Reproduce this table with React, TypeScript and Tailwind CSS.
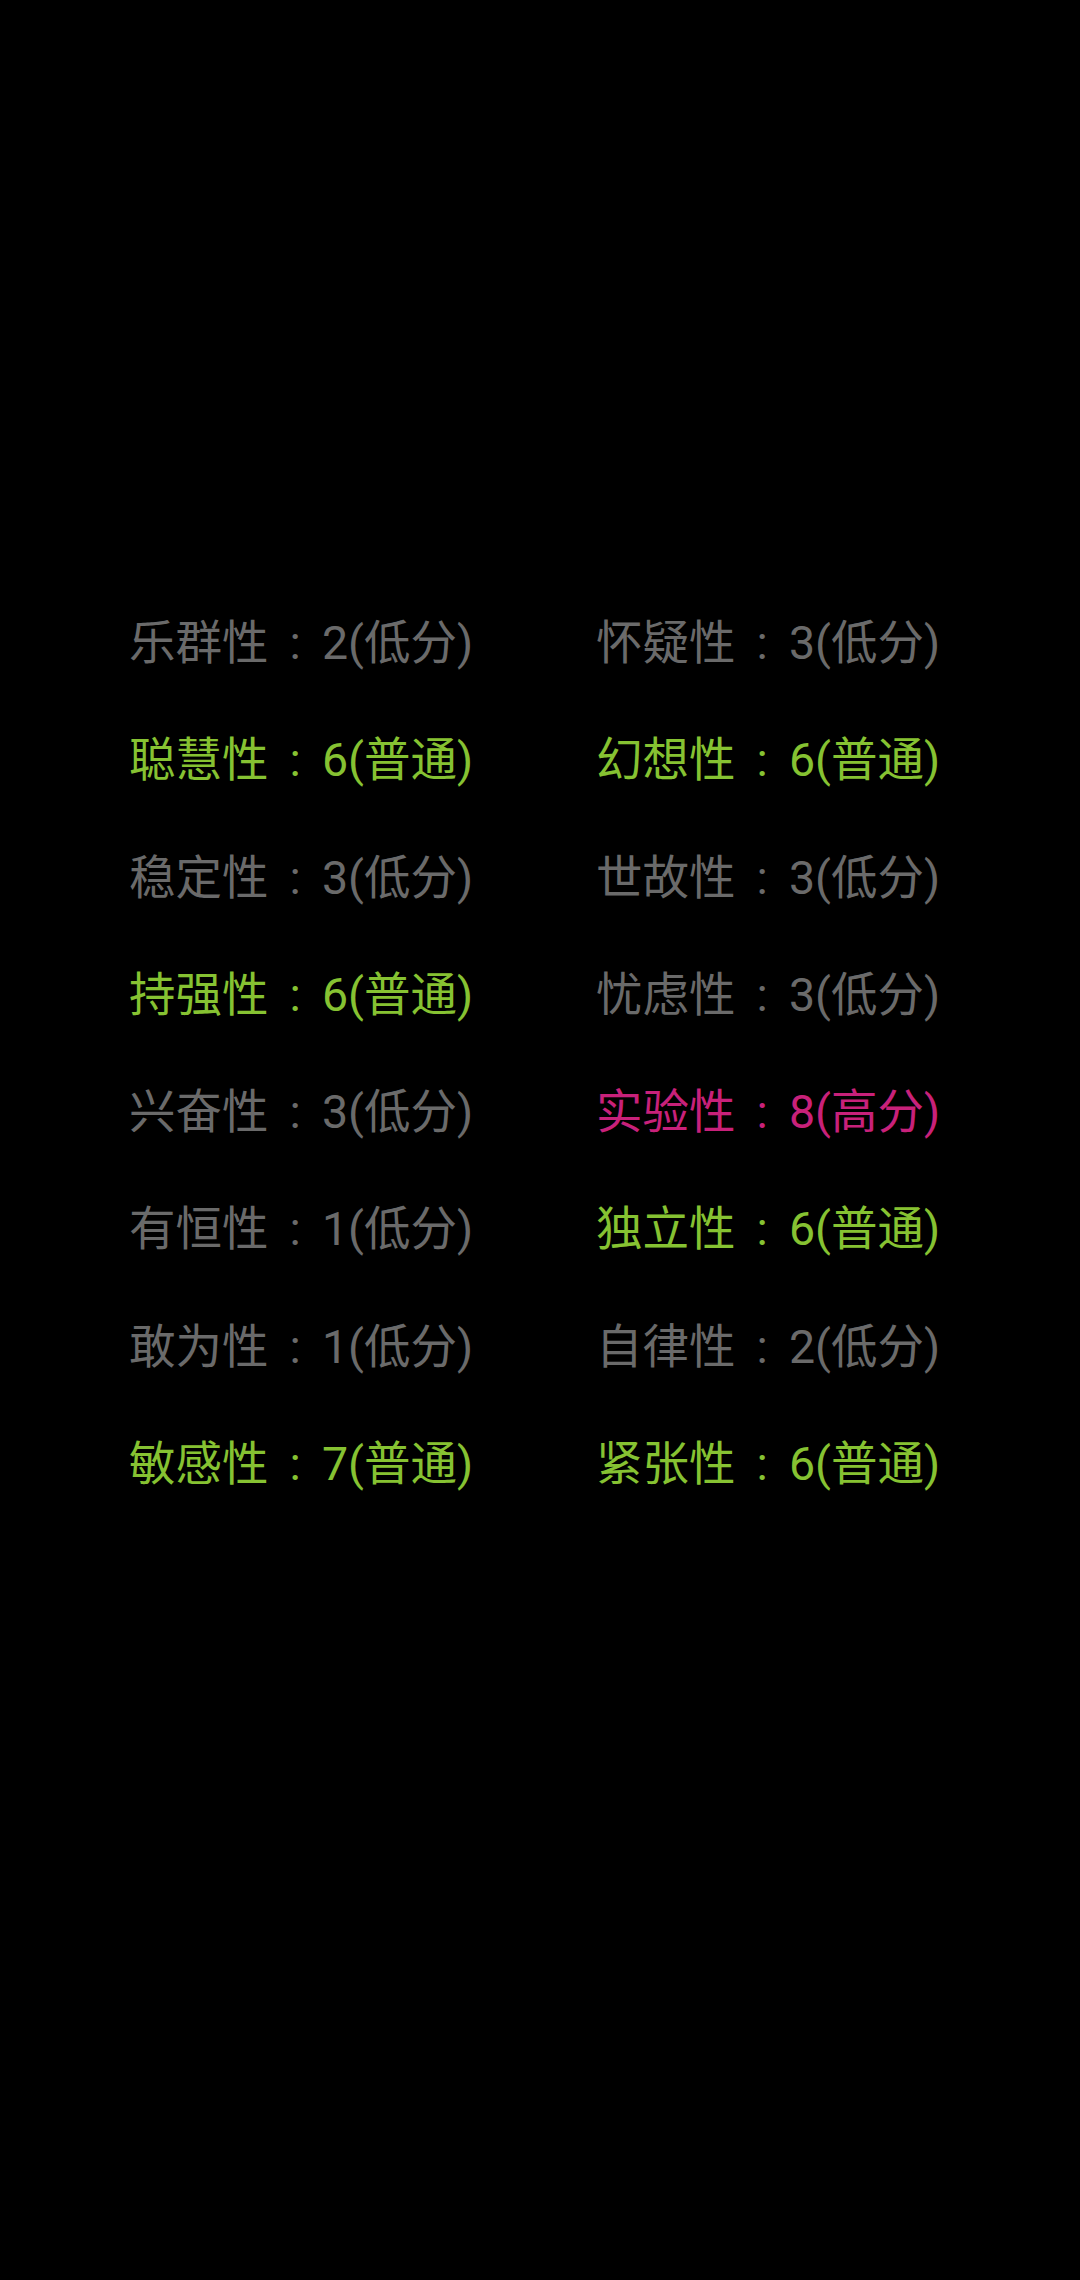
import React from "react";

type Item = { name: string; score: number; level: string };

const rows: [Item, Item][] = [
  [
    { name: "乐群性", score: 2, level: "低分" },
    { name: "怀疑性", score: 3, level: "低分" },
  ],
  [
    { name: "聪慧性", score: 6, level: "普通" },
    { name: "幻想性", score: 6, level: "普通" },
  ],
  [
    { name: "稳定性", score: 3, level: "低分" },
    { name: "世故性", score: 3, level: "低分" },
  ],
  [
    { name: "持强性", score: 6, level: "普通" },
    { name: "忧虑性", score: 3, level: "低分" },
  ],
  [
    { name: "兴奋性", score: 3, level: "低分" },
    { name: "实验性", score: 8, level: "高分" },
  ],
  [
    { name: "有恒性", score: 1, level: "低分" },
    { name: "独立性", score: 6, level: "普通" },
  ],
  [
    { name: "敢为性", score: 1, level: "低分" },
    { name: "自律性", score: 2, level: "低分" },
  ],
  [
    { name: "敏感性", score: 7, level: "普通" },
    { name: "紧张性", score: 6, level: "普通" },
  ],
];

function Cell({ item }: { item: Item }) {
  const color =
    item.level === "高分"
      ? "text-[#c8217a]"
      : item.level === "普通"
      ? "text-[#86c232]"
      : "text-[#6a6a6a]";
  return (
    <div className={`h-[117.3px] leading-[117.3px] whitespace-nowrap ${color}`}>
      {item.name}
      <span className="inline-block w-[1.15em] text-center">:</span>
      {item.score}({item.level})
    </div>
  );
}

export default function App() {
  return (
    <div
      className="w-[1080px] h-[2280px] bg-black pt-[585px] pl-[129px] text-[46.5px]"
      style={{ fontFamily: 'Roboto, "Noto Sans CJK SC", sans-serif' }}
    >
      <div className="grid grid-cols-[467px_467px]">
        {rows.map(([a, b], i) => (
          <React.Fragment key={i}>
            <Cell item={a} />
            <Cell item={b} />
          </React.Fragment>
        ))}
      </div>
    </div>
  );
}
